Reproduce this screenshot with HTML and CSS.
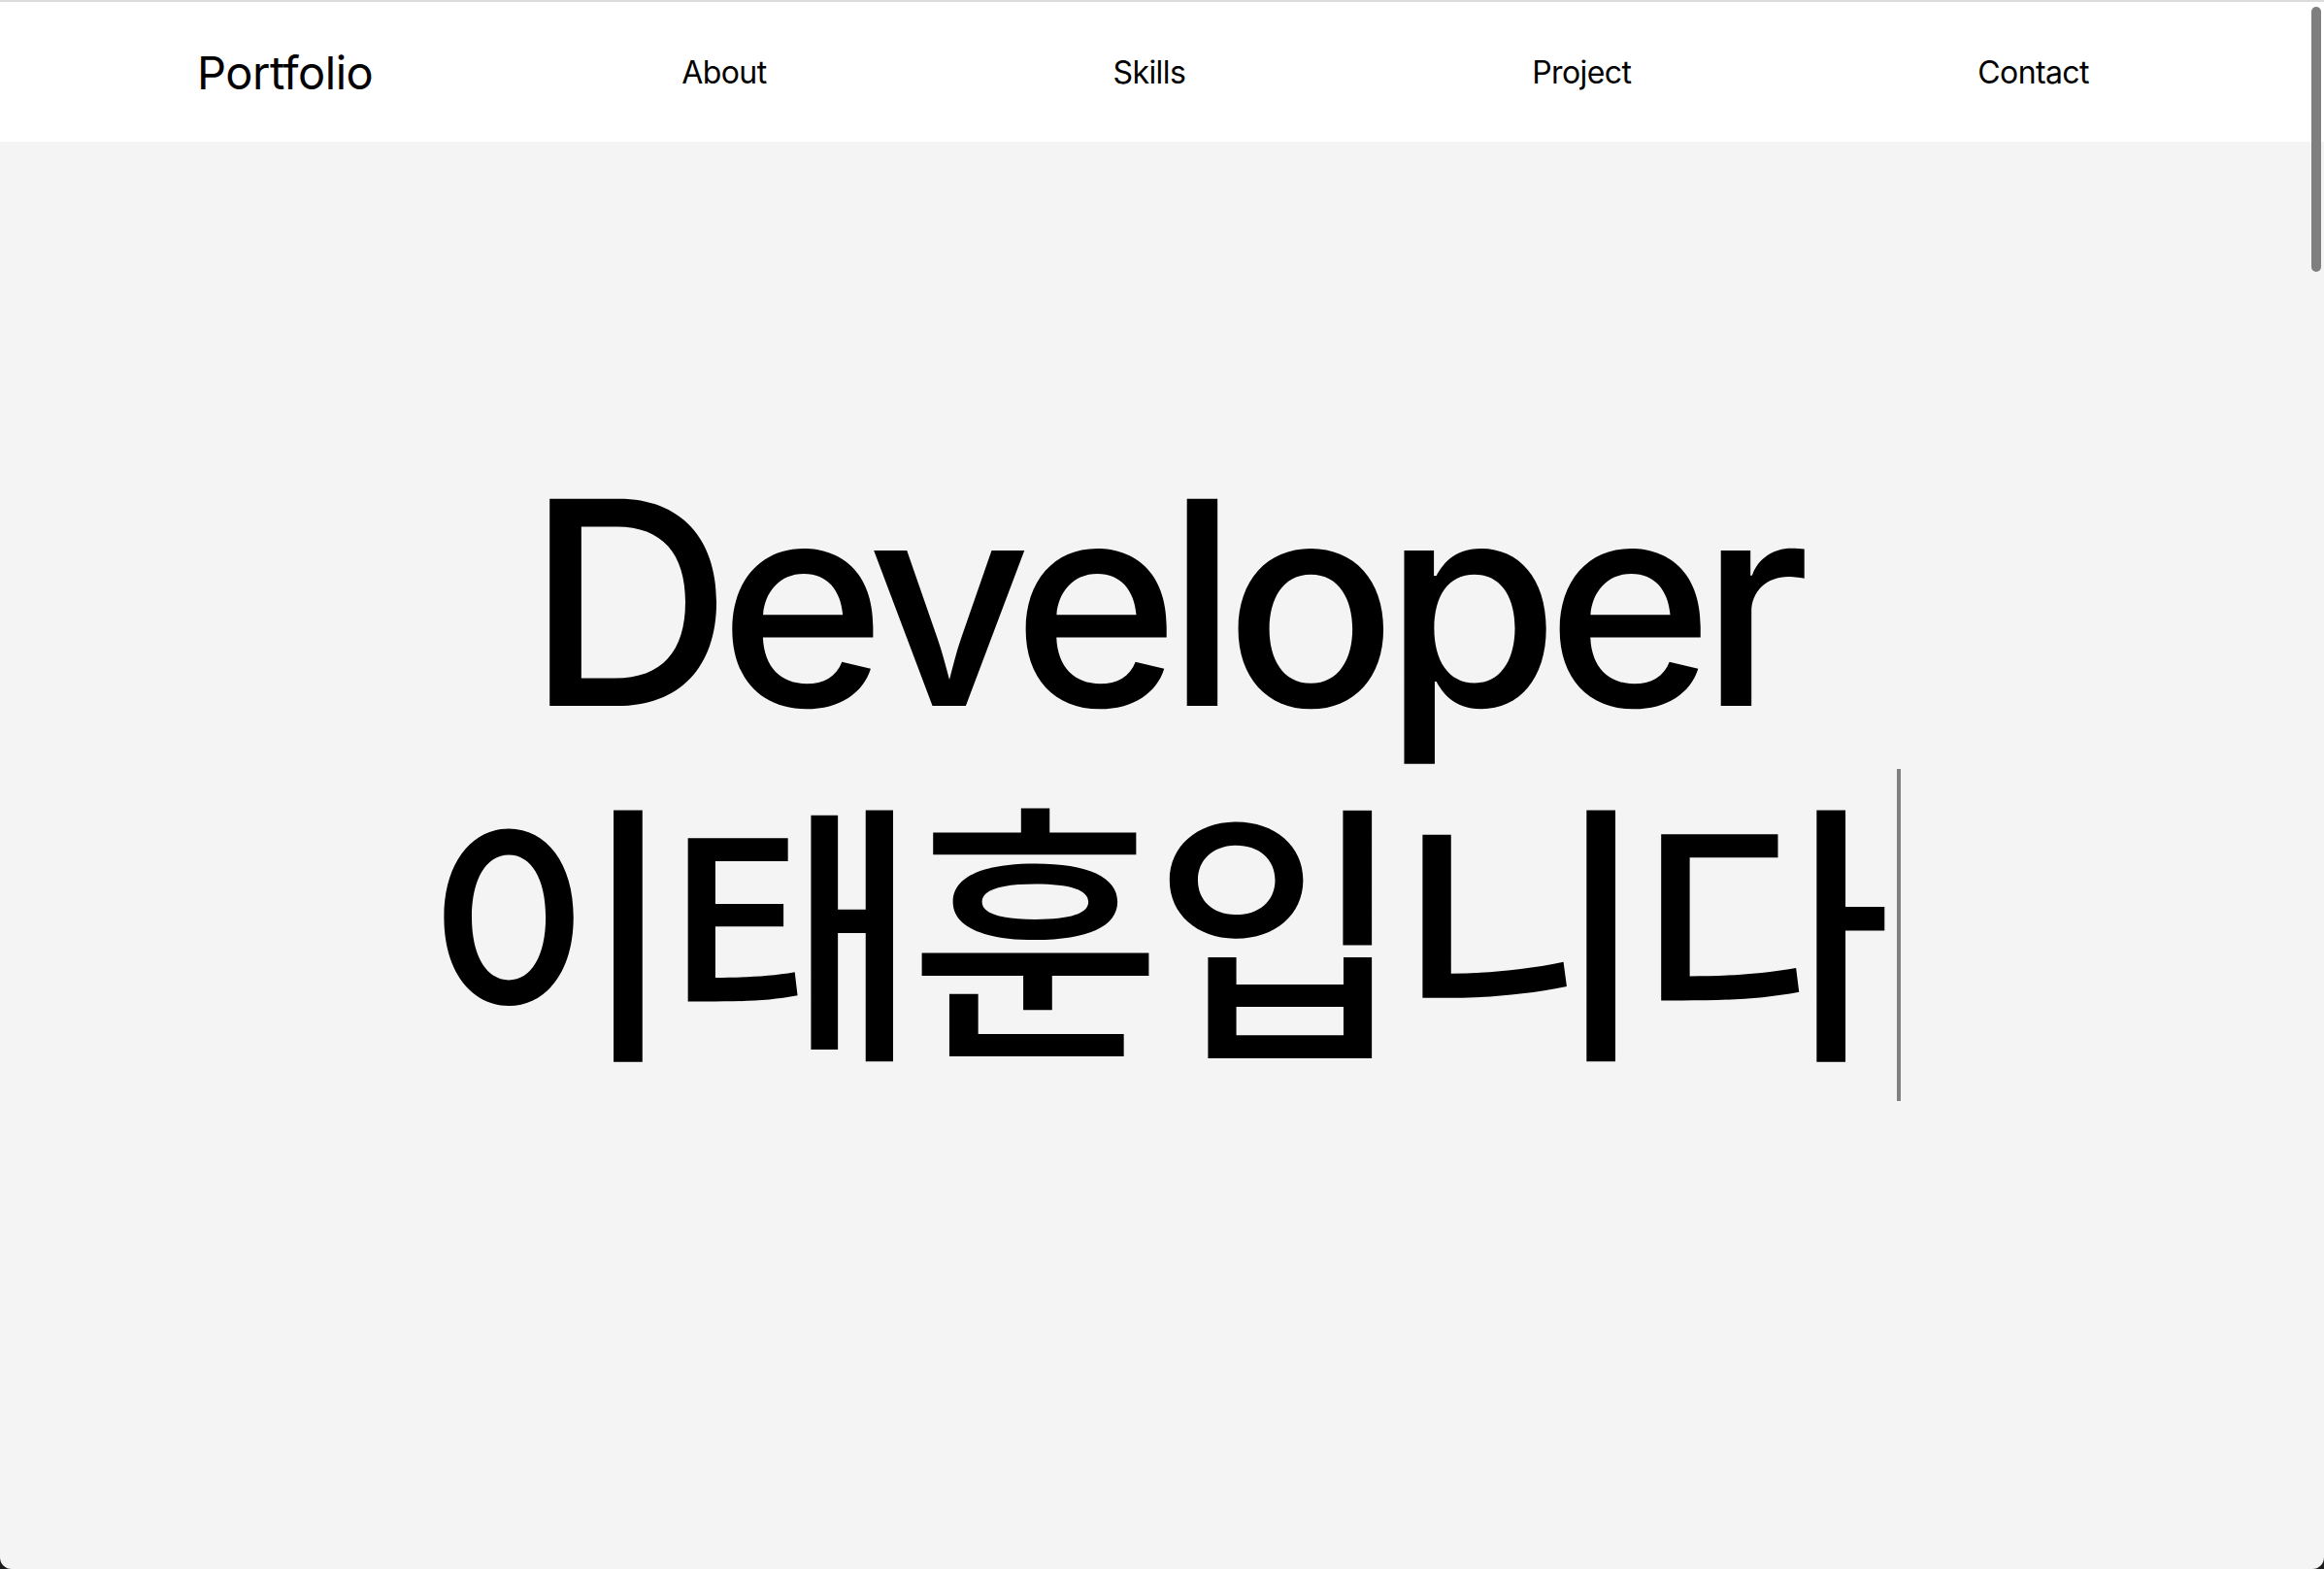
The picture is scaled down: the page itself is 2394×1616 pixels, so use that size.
FILE: index.html
```html
<!DOCTYPE html>
<html lang="ko">
<head>
<meta charset="utf-8">
<title>Portfolio</title>
<link rel="stylesheet" href="styles.css">
</head>
<body>
<div class="page">
  <header class="header">
    <a class="logo" href="#">Portfolio</a>
    <nav class="nav">
      <a href="#about">About</a>
      <a href="#skills">Skills</a>
      <a href="#project">Project</a>
      <a href="#contact">Contact</a>
    </nav>
  </header>
  <main class="hero">
    <h1 class="title">
      <span class="line-en">Developer</span>
      <span class="line-ko"><span class="typed">이태훈입니다</span><span class="cursor"></span></span>
    </h1>
  </main>
</div>
<div class="scrollbar"></div>
</body>
</html>
```

FILE: styles.css
```css
* { box-sizing: border-box; }
html { background: #1c1c1c; }
body {
  margin: 0;
  font-family: "Inter", "Noto Sans CJK KR", sans-serif;
  color: #000;
}
.page {
  min-height: 100vh;
  background: #f4f4f4;
  border-bottom-left-radius: 12px;
  border-bottom-right-radius: 12px;
  overflow: hidden;
}
.header {
  height: 146px;
  border-top: 2px solid #dcdcdc;
  background: #fff;
  display: flex;
  align-items: center;
  padding-left: 203px;
}
.logo {
  font-size: 47px;
  letter-spacing: -0.5px;
  font-weight: 400;
  color: #000;
  text-decoration: none;
}
.nav {
  display: flex;
  gap: 357px;
  margin-left: 318px;
}
.nav a {
  font-size: 32px;
  letter-spacing: -0.6px;
  color: #000;
  text-decoration: none;
}
.hero {
  display: flex;
  justify-content: center;
  padding-top: 304px;
}
.title {
  margin: 0;
  font-weight: 500;
  text-align: center;
}
.line-en {
  display: block;
  font-size: 293px;
  line-height: 342px;
  letter-spacing: -13.5px;
}
.line-ko {
  display: flex;
  justify-content: center;
  align-items: flex-start;
  height: 342px;
}
.typed {
  font-family: "Noto Sans CJK KR", sans-serif;
  font-size: 283px;
  line-height: 310px;
  letter-spacing: -10px;
}
.cursor {
  align-self: stretch;
  width: 4px;
  margin-left: 16px;
  background: #808080;
}
.scrollbar {
  position: fixed;
  top: 7px;
  right: 3px;
  width: 10px;
  height: 273px;
  border-radius: 5px;
  background: #7f7f7f;
}
```
